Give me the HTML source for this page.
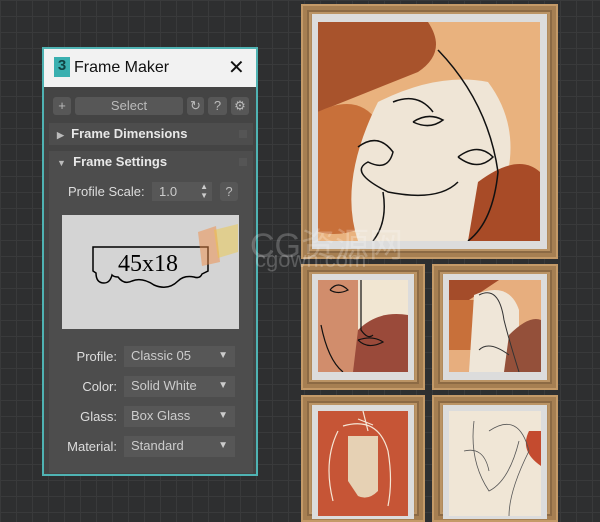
<!DOCTYPE html><html><head><style>
*{margin:0;padding:0;box-sizing:border-box}
body{width:600px;height:522px;overflow:hidden;background:#2e2f30;font-family:"Liberation Sans",sans-serif;position:relative;
background-image:linear-gradient(#393a3b 1px,transparent 1px),linear-gradient(90deg,#393a3b 1px,transparent 1px);background-size:16px 16px}
.a{position:absolute}
.panel{left:42px;top:47px;width:216px;height:429px;border:2px solid #4fb3b3;background:#444}
.title{left:0;top:0;width:212px;height:38px;background:#f2f2f2;color:#111;font-size:16px}
.btn{background:#575757;border-radius:3px;color:#bbb;font-size:13px;text-align:center}
.sec{background:#4d4d4d;color:#e8e8e8;font-weight:bold;font-size:13px}
.lbl{color:#ddd;font-size:13px;text-align:right}
.dd{background:#575757;color:#ccc;font-size:13px;padding-left:7px;line-height:20px}
.frame{background:#b08a5c;border:2px solid #c49a68;box-shadow:inset 0 0 0 4px #a67f52,inset 0 0 0 6px #8c6a44,inset 0 0 0 8px #bb9465}
.mat{background:#dcdcdc}
</style></head><body>
<div class="a panel">
 <div class="a title"><div class="a" style="left:10px;top:8px;width:16px;height:20px;background:#3ab0b0;color:#144;font-weight:bold;font-size:15px;text-align:center">3</div>
 <div class="a" style="left:30px;top:10px">Frame Maker</div><div class="a" style="left:184px;top:6px;font-size:20px">✕</div></div>
 <div class="a btn" style="left:9px;top:48px;width:18px;height:18px;line-height:18px">+</div>
 <div class="a btn" style="left:31px;top:48px;width:108px;height:18px;line-height:18px">Select</div>
 <div class="a btn" style="left:143px;top:48px;width:17px;height:18px;line-height:18px">↻</div>
 <div class="a btn" style="left:164px;top:48px;width:19px;height:18px;line-height:18px">?</div>
 <div class="a btn" style="left:187px;top:48px;width:18px;height:18px;line-height:18px">⚙</div>
 <div class="a sec" style="left:5px;top:74px;width:204px;height:22px;line-height:22px;padding-left:8px"><span style="font-size:9px;color:#bbb">▶</span>&nbsp; Frame Dimensions<span class="a" style="right:6px;top:7px;width:8px;height:8px;background:#555"></span></div>
 <div class="a sec" style="left:5px;top:102px;width:204px;height:322px;padding-left:8px;line-height:22px"><span style="font-size:9px;color:#bbb">▼</span>&nbsp; Frame Settings<span class="a" style="right:6px;top:7px;width:8px;height:8px;background:#555"></span></div>
 <div class="a lbl" style="left:24px;top:135px;font-weight:normal">Profile Scale:</div>
 <div class="a dd" style="left:108px;top:133px;width:60px;height:19px;line-height:19px">1.0<span class="a" style="right:4px;top:0;font-size:8px;line-height:9px">▲<br>▼</span></div>
 <div class="a btn" style="left:176px;top:133px;width:18px;height:19px;line-height:19px">?</div>
 <div class="a" style="left:18px;top:166px;width:177px;height:114px;background:#d4d4d4">
  <svg width="177" height="114" class="a" style="left:0;top:0"><path d="M31 32H146V56L140 59Q138 64 132 62Q122 60 116 66Q106 76 92 70Q80 62 70 66Q62 70 56 62Q52 62 50 60Q48 68 42 68Q34 68 34 58L31 56Z" fill="none" stroke="#000" stroke-width="1.5"/></svg>
  <div class="a" style="left:56px;top:36px;font-family:'Liberation Serif',serif;font-size:24px;color:#000">45x18</div>
 </div>
 <div class="a lbl" style="left:10px;top:300px;width:63px">Profile:</div>
 <div class="a dd" style="left:80px;top:297px;width:111px;height:21px">Classic 05<span class="a" style="right:7px;font-size:10px">▼</span></div>
 <div class="a lbl" style="left:10px;top:330px;width:63px">Color:</div>
 <div class="a dd" style="left:80px;top:327px;width:111px;height:21px">Solid White<span class="a" style="right:7px;font-size:10px">▼</span></div>
 <div class="a lbl" style="left:10px;top:360px;width:63px">Glass:</div>
 <div class="a dd" style="left:80px;top:357px;width:111px;height:21px">Box Glass<span class="a" style="right:7px;font-size:10px">▼</span></div>
 <div class="a lbl" style="left:10px;top:390px;width:63px">Material:</div>
 <div class="a dd" style="left:80px;top:387px;width:111px;height:21px">Standard<span class="a" style="right:7px;font-size:10px">▼</span></div>
</div>

<div class="a frame" style="left:301px;top:4px;width:257px;height:255px"></div>
<div class="a mat" style="left:312px;top:14px;width:235px;height:235px"></div>
<svg class="a" style="left:318px;top:22px" width="222" height="219">
<rect width="222" height="219" fill="#e9b27e"/>
<path d="M0 0H110Q130 30 100 50L0 90Z" fill="#a8532c"/>
<path d="M0 90Q40 70 60 100L80 180Q40 220 0 210Z" fill="#c8703a"/>
<path d="M60 80Q120 50 170 60Q200 100 190 150L180 219H40Q20 160 60 80Z" fill="#efe5d6"/>
<path d="M160 160Q200 130 222 150V219H150Z" fill="#a84b27"/>
<g fill="none" stroke="#111" stroke-width="1.5"><path d="M120 28Q170 80 180 150Q175 200 150 219"/><path d="M40 125Q60 110 75 130Q70 150 50 140Q30 150 70 170Q120 180 140 160"/><path d="M75 80Q100 70 115 90"/><path d="M95 100Q110 90 125 98Q112 108 95 100"/><path d="M140 135Q160 120 175 135Q160 150 140 135"/><path d="M65 170Q70 200 55 219"/></g>
</svg>
<div class="a frame" style="left:301px;top:264px;width:124px;height:126px"></div>
<div class="a mat" style="left:312px;top:274px;width:102px;height:106px"></div>
<svg class="a" style="left:318px;top:280px" width="90" height="92"><rect width="90" height="92" fill="#f1e6d2"/><path d="M0 0H40V92H0Z" fill="#d18d6c"/><path d="M40 50Q60 30 90 35V92H35Z" fill="#9a4a3a"/><g fill="none" stroke="#111" stroke-width="1.2"><path d="M3 45Q10 80 25 92"/><path d="M43 0V50Q50 60 55 55"/><path d="M40 60Q55 55 65 62Q50 70 40 60"/><path d="M12 10Q20 0 30 10Q20 15 12 10"/></g></svg>
<div class="a frame" style="left:432px;top:264px;width:126px;height:126px"></div>
<div class="a mat" style="left:443px;top:274px;width:104px;height:106px"></div>
<svg class="a" style="left:449px;top:280px" width="92" height="92"><rect width="92" height="92" fill="#e7ae7e"/><path d="M0 0H50L20 20H0Z" fill="#a44c2a"/><path d="M0 20H30V70H0Z" fill="#c8703a"/><path d="M25 15Q60 0 70 30L70 92H20Z" fill="#efe6d8"/><path d="M60 55Q80 35 92 40V92H55Z" fill="#94503a"/><path d="M30 15Q50 5 55 40Q60 60 70 92M30 70Q40 60 60 75" fill="none" stroke="#333" stroke-width="1"/></svg>
<div class="a frame" style="left:301px;top:395px;width:124px;height:127px"></div>
<div class="a mat" style="left:312px;top:405px;width:102px;height:114px"></div>
<svg class="a" style="left:318px;top:411px" width="90" height="105"><rect width="90" height="105" fill="#c65536"/><path d="M30 25H60V80Q50 90 40 85L30 70Z" fill="#e6d1b4"/><g fill="none" stroke="#f5e6d5" stroke-width="1.2"><path d="M20 20Q5 50 15 90M25 15Q60 5 70 40Q75 70 70 95"/><path d="M45 0L50 20M40 8L55 14"/></g></svg>
<div class="a frame" style="left:432px;top:395px;width:126px;height:127px"></div>
<div class="a mat" style="left:443px;top:405px;width:104px;height:114px"></div>
<svg class="a" style="left:449px;top:411px" width="92" height="105"><rect width="92" height="105" fill="#f0e6d6"/><path d="M80 20Q70 40 92 55V20Z" fill="#c44b2f"/><g fill="none" stroke="#555" stroke-width="0.8"><path d="M25 10Q20 50 40 80Q60 70 70 30M40 20Q70 0 80 40Q60 80 60 105M15 40Q35 35 40 60"/></g></svg>
<svg class="a" style="left:194px;top:222px" width="50" height="46"><path d="M4 10L22 4L26 40L8 44Z" fill="rgba(240,140,70,.5)"/><path d="M20 8L44 2V30L24 36Z" fill="rgba(240,200,60,.45)"/></svg>
<div class="a" style="left:250px;top:218px;font-size:34px;color:rgba(255,255,255,.22);font-family:'Liberation Sans','Noto Sans CJK SC',sans-serif">CG资源网</div>
<div class="a" style="left:255px;top:247px;font-size:22px;color:rgba(255,255,255,.22)">cgown.com</div>
</body></html>
